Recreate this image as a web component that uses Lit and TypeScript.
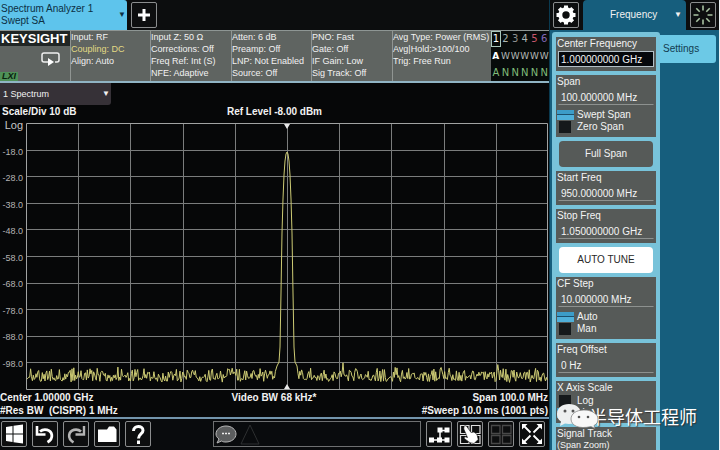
import { LitElement, html, css, svg, nothing } from "lit";
import { customElement, property } from "lit/decorators.js";
import { classMap } from "lit/directives/class-map.js";

const PLOT_W = 522;
const PLOT_H = 267;

// Noise floor with a narrow carrier in the middle of the span.
function buildTrace(): string {
  let seed = 71;
  const rnd = () => {
    seed = (seed * 16807) % 2147483647;
    return seed / 2147483647;
  };
  const noise = () => 257 - Math.pow(rnd(), 2) * 11 + (rnd() - 0.5) * 5 - (rnd() > 0.96 ? 5 : 0);
  const pts: string[] = [];
  for (let x = 1; x < 250; x += 0.9) pts.push(`${x.toFixed(1)},${noise().toFixed(1)}`);
  pts.push("251,243", "253,239", "254,224", "255,170", "256,110", "257,76", "258,52", "259,38", "260,31", "261,29");
  pts.push("262,31", "263,38", "264,52", "265,76", "266,110", "267,170", "268,224", "269,239", "271,243");
  for (let x = 272; x < PLOT_W; x += 0.9) pts.push(`${x.toFixed(1)},${noise().toFixed(1)}`);
  return pts.join(" ");
}
const TRACE = buildTrace();

const ICONS: Record<string, unknown> = {
  plus: svg`<path d="M12 6v12M6 12h12" stroke="#fff" stroke-width="3"/>`,
  windows: svg`<path fill="#fff" d="M4 5l6.500-1v7.500H4zM11.500 3.800L21 2.400v9.100h-9.500zM4 12.500h6.500V20L4 19zM11.500 12.500H21v9.100l-9.500-1.400z"/>`,
  undo: svg`<path d="M7 9.500C11 6 18 7.500 18.800 13c.4 3-1.300 5.500-4.300 7.300" fill="none" stroke="#fff" stroke-width="2.800"/><path d="M4 4v8.500h8.500" fill="none" stroke="#fff" stroke-width="2.600"/>`,
  redo: svg`<path d="M17 9.500C13 6 6 7.500 5.200 13c-.4 3 1.300 5.500 4.300 7.300" fill="none" stroke="#b4b4b4" stroke-width="2.600"/><path d="M20 4v8.500h-8.500" fill="none" stroke="#b4b4b4" stroke-width="2.400"/>`,
  folder: svg`<path fill="#fff" d="M3 7.500h9l2-3h5l2.500 3V20H3z"/>`,
  help: svg`<path d="M7.500 9c0-6 9.500-6 9.500-.5 0 3.500-4.500 3.500-4.500 8" fill="none" stroke="#fff" stroke-width="3"/><rect x="11" y="18.500" width="3" height="3.500" fill="#fff"/>`,
  nodes: svg`<path d="M5 18h14M13 8.500V18M13 8.500h7" stroke="#fff" stroke-width="1.500"/><path fill="#fff" d="M10.500 5.500h5v5h-5zM17.500 5.500h5v5h-5zM2 15.500h5v5H2zM10 15.500h5v5h-5zM17.500 15.500h5v5h-5z"/>`,
  touch: svg`<path d="M2.500 3.500H11v8H2.500zM13.500 3.500H22v8h-8.500zM2.500 13.500H11v8H2.500zM13.500 13.500H22v8h-8.500z" fill="none" stroke="#ddd" stroke-width="1.200"/><path fill="#fff" stroke="#111" stroke-width=".6" d="M6 4.500c.8-1.200 2.200-.8 3 .3l4 5.700 3-.5 3 2.500 1.200 5-4.200 4-4-.8-5.500-4c-.7-1.300.3-2.200 1.500-1.700l1.500.5L5.800 7z"/>`,
  grid: svg`<path d="M2.500 3.500H11v8H2.500zM13.500 3.500H22v8h-8.500zM2.500 13.500H11v8H2.500zM13.500 13.500H22v8h-8.500z" fill="none" stroke="#484848" stroke-width="1.300"/>`,
  expand: svg`<path d="M4 4l6.500 6.500M20 4l-6.500 6.500M4 20l6.500-6.500M20 20l-6.500-6.500" stroke="#fff" stroke-width="1.800"/><path fill="#fff" d="M2 2h5.500L2 7.500zM22 2h-5.500L22 7.500zM2 22h5.500L2 16.500zM22 22h-5.500l5.500-5.500z"/>`,
  gear: svg`<circle cx="12" cy="12" r="5.700" fill="none" stroke="#fff" stroke-width="4"/><path d="M12 2.500V6M12 18v3.500M2.500 12H6M18 12h3.500M5.300 5.300l2.300 2.300M16.400 16.400l2.300 2.300M18.700 5.300l-2.300 2.300M7.600 16.400l-2.300 2.300" stroke="#fff" stroke-width="4"/>`,
  burst: svg`<path d="M12 2.500v5M12 16.500v5M2.500 12h5M16.500 12h5M5.300 5.300l3.400 3.400M15.300 15.300l3.400 3.400M18.700 5.300l-3.400 3.400M8.700 15.300l-3.400 3.400" stroke="#a9c3a2" stroke-width="1.600"/>`,
};

@customElement("icon-button")
class IconButton extends LitElement {
  @property() icon = "";
  @property() label = "";
  static styles = css`
    :host { display: block; flex: none; }
    .btn {
      display: grid; place-items: center; width: 26px; height: 26px; padding: 0;
      background: #0d0e0f; border: 1px solid #8b8d8e; border-radius: 2px;
    }
    .glyph { width: 24px; height: 24px; display: block; }
  `;
  render() {
    return html`<button class="btn" aria-label=${this.label}>
      <svg class="glyph" viewBox="0 0 24 24" aria-hidden="true">${ICONS[this.icon]}</svg>
    </button>`;
  }
}

@customElement("setting-card")
class SettingCard extends LitElement {
  @property() name = "";
  @property() note = "";
  @property() value = "";
  @property({ type: Boolean }) active = false;
  @property({ type: Array }) options: string[] = [];
  @property({ type: Number }) selected = 0;
  static styles = css`
    :host { display: block; }
    .card {
      background: #565a58; color: #f4f4f4; padding: 0 2px 4px 0;
      font: 10px/14px "Liberation Sans", Arial, sans-serif;
    }
    .name { display: block; padding-left: 1px; white-space: nowrap; }
    .note { display: block; padding-left: 1px; font-size: 9px; line-height: 8px; }
    .value {
      display: block; box-sizing: border-box; width: calc(100% - 2px); height: 16px; margin: 0 0 0 2px;
      padding: 0 0 0 2px; font: inherit; color: inherit; background: none;
      border: 1px solid transparent; border-bottom-color: #8d918f; outline: none;
    }
    .value.active { background: #05080c; border-color: #b3bfc6; }
    .options { border: 0; margin: 0; padding: 0; }
    .value + .options { padding-top: 4px; }
    .option { display: grid; grid-template-columns: 18px 1fr; column-gap: 3px; align-items: center; height: 12px; line-height: 12px; }
    .radio { appearance: none; margin: 0; width: 12px; height: 12px; justify-self: center; background: #15191b; }
    .radio:checked { width: 17px; height: 10px; background: linear-gradient(#3c9cc8 0 4px, #1b4f6c 4px 5px, #4fb0da 5px); }
  `;
  render() {
    return html`<div class="card">
      ${this.value
        ? html`<label class="name" for="v">${this.name}</label>
            <input id="v" class=${classMap({ value: true, active: this.active })} .value=${this.value} />`
        : html`<span class="name">${this.name}</span>`}
      ${this.note ? html`<span class="note">${this.note}</span>` : nothing}
      ${this.options.length
        ? html`<fieldset class="options" aria-label=${this.name}>
            ${this.options.map(
              (o, i) => html`<label class="option"><input class="radio" type="radio" name="mode" .checked=${i === this.selected} />${o}</label>`
            )}
          </fieldset>`
        : nothing}
    </div>`;
  }
}

@customElement("spectrum-plot")
class SpectrumPlot extends LitElement {
  static styles = css`
    :host { display: block; }
    .plot { display: block; width: 100%; height: 267px; }
    .line { vector-effect: non-scaling-stroke; fill: none; }
    .grid { stroke: #7a7c7c; }
    .frame { stroke: #a0a2a2; }
    .trace { stroke: #cdcb74; stroke-linejoin: round; }
    .marker { fill: #e8e8e8; }
  `;
  render() {
    const steps = [1, 2, 3, 4, 5, 6, 7, 8, 9];
    return html`<svg class="plot" viewBox="0 0 ${PLOT_W} ${PLOT_H}" preserveAspectRatio="none" role="img" aria-label="Spectrum trace">
      ${steps.map((i) => svg`<line class="line grid" x1=${Math.round(i * 52.2) + 0.5} x2=${Math.round(i * 52.2) + 0.5} y1="0" y2="267"/>
        <line class="line grid" x1="0" x2="522" y1=${Math.round(i * 26.6) + 0.5} y2=${Math.round(i * 26.6) + 0.5}/>`)}
      <rect class="line frame" x="0.5" y="0.5" width="521" height="266"/>
      <path class="marker" d="M258 1h6l-3 5zM258 266h6l-3-5z"/>
      <polyline class="line trace" points=${TRACE}/>
    </svg>`;
  }
}

const STATUS = [
  ["Input: RF", "Coupling: DC", "Align: Auto"],
  ["Input Z: 50 Ω", "Corrections: Off", "Freq Ref: Int (S)", "NFE: Adaptive"],
  ["Atten: 6 dB", "Preamp: Off", "LNP: Not Enabled", "Source: Off"],
  ["PNO: Fast", "Gate: Off", "IF Gain: Low", "Sig Track: Off"],
  ["Avg Type: Power (RMS)", "Avg|Hold:>100/100", "Trig: Free Run"],
];
const LEVELS = ["-18.0", "-28.0", "-38.0", "-48.0", "-58.0", "-68.0", "-78.0", "-88.0", "-98.0"];

@customElement("app-root")
class AppRoot extends LitElement {
  static styles = css`
    :host {
      display: block; position: relative; height: 100vh; overflow: hidden; background: #060708; color: #f2f2f2;
      font: 10px/12px "Liberation Sans", Arial, sans-serif;
    }
    button, select { font: inherit; color: inherit; }
    .screen { display: grid; grid-template-columns: minmax(0, 1fr) 170px; height: 100%; border-right: 1px solid #eef4f6; box-sizing: border-box; }
    .main { display: flex; flex-direction: column; min-width: 0; }
    .tabs { display: flex; gap: 4px; height: 30px; align-items: center; background: #0c0d0e; }
    .mode {
      position: relative; width: 127px; height: 30px; padding: 2px 1px 3px; text-align: left; line-height: 12px;
      background: #5ec4ec; color: #0c3044; border: 0; border-radius: 0 3px 0 0;
    }
    .caret { font-size: 8px; line-height: 8px; }
    .mode .caret { position: absolute; right: 1px; top: 11px; }

    .status {
      display: grid; grid-template-columns: 70fr 80fr 81fr 80fr 81fr 99fr 58px; height: 50px;
      background: #5f6461; border-top: 1px solid #8e9694; border-bottom: 2px solid #90b4c4;
      font-size: 9px; line-height: 12px;
    }
    .cell { border-left: 1px solid #909592; white-space: nowrap; min-width: 0; }
    .brand { display: flex; flex-direction: column; justify-content: space-between; align-items: flex-start; }
    .logo { align-self: stretch; background: #202524; color: #fff; font: bold 13px/15px "Liberation Sans", Arial, sans-serif; padding-left: 1px; }
    .loop { width: 22px; height: 16px; align-self: flex-end; margin-right: 8px; }
    .lxi { background: #4f9158; color: #09220d; font: italic bold 9px/9px "Liberation Sans", Arial, sans-serif; padding: 0 2px; }
    .warn { color: #e2da84; }
    .traces { table-layout: fixed; width: 58px; height: 50px; border-collapse: collapse; background: #070b0a; font: 10px/16px "DejaVu Sans", sans-serif; text-align: center; }
    .traces th { font-weight: normal; padding: 0; }
    .traces td { padding: 0; }
    .traces .sel { outline: 1px solid #a9c8bd; outline-offset: -1px; color: #fff; }
    .traces .t3 { color: #8d918f; } .traces .t2, .traces .t4 { color: #aab4b2; }
    .traces .t5 { color: #c8566c; } .traces .t6 { color: #8268b8; }
    .types { color: #b4b8b6; font-size: 9px; } .types .on { color: #fff; font-weight: bold; }
    .dets { color: #80bd7b; }

    .view { display: flex; align-items: center; width: 111px; height: 22px; background: #363137; border-radius: 0 0 3px 0; }
    .pick { appearance: none; flex: 1; min-width: 0; background: none; border: 0; padding: 0 0 0 3px; font-size: 9px; outline: none; }
    .view .caret { padding-right: 1px; }
    .scale { display: grid; grid-template-columns: 1fr auto 1fr; line-height: 13px; font-weight: bold; padding: 0 2px; }
    .graph { display: grid; grid-template-columns: 26px minmax(0, 1fr); padding-right: 1px; }
    .graph spectrum-plot { margin-top: 5px; }
    .axis { display: flex; flex-direction: column; justify-content: space-between; height: 253px; padding-right: 3px; text-align: right; color: #b4b4b4; font-size: 9px; line-height: 14px; }
    .log { font-size: 11px; color: #c6c6c6; }
    .foot { display: grid; grid-template-columns: 1fr auto 1fr; font-weight: bold; line-height: 13px; padding: 1px 1px 0 0; white-space: nowrap; }
    .end { text-align: right; }
    .toolbar { display: flex; flex: 1; align-items: flex-start; gap: 5px; padding: 2px 4px 0 1px; border-top: 2px solid #7294ac; background: #090b0d; }
    .message { flex: 1; height: 24px; margin-left: 57px; border: 1px solid #6e7071; display: flex; align-items: center; }
    .bubble { width: 48px; height: 24px; }

    .side { display: flex; flex-direction: column; min-width: 0; border-left: 1px solid #0a3a50; }
    .sidetop { display: grid; grid-template-columns: 26px 1fr 26px; gap: 4px; height: 30px; padding: 0 3px; background: #0c0d0e; align-items: center; }
    .topic { display: flex; align-items: center; height: 30px; background: #165e7d; border-radius: 4px 4px 0 0; }
    .topic .pick { font-size: 10px; padding: 0 0 0 27px; }
    .topic .caret { padding-right: 4px; }
    .sidebody { display: grid; grid-template-columns: 108px 1fr; flex: 1; min-height: 0; background: #165e7d; padding: 2px 3px 0 2px; }
    .menu { display: flex; flex-direction: column; gap: 4px; background: #78c3da; padding: 5px 4px 0 4px; border-radius: 3px 3px 0 0; }
    .action { flex: none; height: 26px; margin: 0 3px; background: #565a58; border: 0; border-radius: 4px; }
    .action.light { background: #fff; color: #282828; }
    .settings { height: 28px; margin-top: 3px; background: #6cc9e6; color: #123c50; border: 0; border-radius: 0 3px 3px 0; text-align: left; padding: 0 0 0 3px; }

    .credit {
      position: absolute; right: 23px; bottom: 21px; display: flex; align-items: center; color: #fff;
      font: 18px/24px "Noto Sans CJK SC", sans-serif; text-shadow: 1px 1px 1px #333;
    }
    .chat { width: 44px; height: 26px; margin-right: -11px; z-index: 1; }
  `;

  render() {
    return html`
      <div class="screen">
        <main class="main">
          <nav class="tabs">
            <button class="mode">Spectrum Analyzer 1<br />Swept SA<span class="caret">▼</span></button>
            <icon-button icon="plus" label="Add screen"></icon-button>
          </nav>
          <section class="status">
            <div class="brand">
              <span class="logo">KEYSIGHT</span>
              <svg class="loop" viewBox="0 0 22 16" aria-hidden="true">
                <path d="M8 11H4q-2 0-2-2V4q0-2 2-2h13q2 0 2 2v5q0 2-2 2h-2" fill="none" stroke="#f0f0f0" stroke-width="1.500" />
                <path d="M8 7l6 4-6 4z" fill="#fff" />
              </svg>
              <span class="lxi">LXI</span>
            </div>
            ${STATUS.map(
              (col) => html`<div class="cell">
                ${col.map((t) => html`<div>${t.startsWith("Coupling") ? html`<span class="warn">${t}</span>` : t}</div>`)}
              </div>`
            )}
            <table class="traces" aria-label="Traces">
              <thead><tr>${[1, 2, 3, 4, 5, 6].map((n) => html`<th class=${n === 1 ? "sel" : `t${n}`}>${n}</th>`)}</tr></thead>
              <tbody>
                <tr class="types">${[..."AWWWWW"].map((c, i) => html`<td class=${i ? "" : "on"}>${c}</td>`)}</tr>
                <tr class="dets">${[..."ANNNNN"].map((c) => html`<td>${c}</td>`)}</tr>
              </tbody>
            </table>
          </section>
          <div class="view">
            <select class="pick" aria-label="View"><option>1 Spectrum</option></select>
            <span class="caret">▼</span>
          </div>
          <div class="scale"><span>Scale/Div 10 dB</span><span>Ref Level -8.00 dBm</span><span></span></div>
          <div class="graph">
            <div class="axis"><span class="log">Log</span>${LEVELS.map((l) => html`<span>${l}</span>`)}</div>
            <spectrum-plot></spectrum-plot>
          </div>
          <div class="foot">
            <span>Center 1.00000 GHz</span><span>Video BW 68 kHz*</span><span class="end">Span 100.0 MHz</span>
            <span>#Res BW&nbsp; (CISPR) 1 MHz</span><span></span><span class="end">#Sweep 10.0 ms (1001 pts)</span>
          </div>
          <footer class="toolbar">
            <icon-button icon="windows" label="Windows"></icon-button>
            <icon-button icon="undo" label="Undo"></icon-button>
            <icon-button icon="redo" label="Redo"></icon-button>
            <icon-button icon="folder" label="Files"></icon-button>
            <icon-button icon="help" label="Help"></icon-button>
            <div class="message">
              <svg class="bubble" viewBox="0 0 48 24" aria-hidden="true">
                <path d="M12 4c5.500 0 10 3.500 10 8s-4.500 8-10 8c-1.500 0-3 0-4.500-1L3 21l2-4c-2-1.500-3-3-3-5 0-4.500 4.500-8 10-8z" fill="#5c5e5f" stroke="#b8b8b8" />
                <path d="M8 11.500h2M11 11.500h2M14 11.500h2" stroke="#eee" stroke-width="1.500" />
                <path d="M36 3l9 19H27z" fill="none" stroke="#2d2f30" />
              </svg>
            </div>
            <icon-button icon="nodes" label="Block diagram"></icon-button>
            <icon-button icon="touch" label="Touch"></icon-button>
            <icon-button icon="grid" label="Multiple screens"></icon-button>
            <icon-button icon="expand" label="Full screen"></icon-button>
          </footer>
        </main>
        <aside class="side">
          <div class="sidetop">
            <icon-button icon="gear" label="System"></icon-button>
            <div class="topic">
              <select class="pick" aria-label="Menu"><option>Frequency</option></select>
              <span class="caret">▼</span>
            </div>
            <icon-button icon="burst" label="Activity"></icon-button>
          </div>
          <div class="sidebody">
            <div class="menu">
              <setting-card name="Center Frequency" value="1.000000000 GHz" active></setting-card>
              <setting-card name="Span" value="100.000000 MHz" .options=${["Swept Span", "Zero Span"]}></setting-card>
              <button class="action">Full Span</button>
              <setting-card name="Start Freq" value="950.000000 MHz"></setting-card>
              <setting-card name="Stop Freq" value="1.050000000 GHz"></setting-card>
              <button class="action light">AUTO TUNE</button>
              <setting-card name="CF Step" value="10.000000 MHz" .options=${["Auto", "Man"]}></setting-card>
              <setting-card name="Freq Offset" value="0 Hz"></setting-card>
              <setting-card name="X Axis Scale" .options=${["Log", "Lin"]} .selected=${1}></setting-card>
              <setting-card name="Signal Track" note="(Span Zoom)"></setting-card>
            </div>
            <button class="settings">Settings</button>
          </div>
        </aside>
      </div>
      <div class="credit">
        <svg class="chat" viewBox="0 0 44 26" aria-hidden="true">
          <path d="M13 1c7 0 12 4 12 10s-5 10-12 10l-4-.6L4 23l1-4.500C2 17 1 14 1 11 1 5 6 1 13 1z" fill="#eef0f0" />
          <circle cx="9" cy="8" r="1.500" fill="#555" /><circle cx="17" cy="8" r="1.500" fill="#555" />
          <path d="M28 7c8 0 14 4 14 9 0 3-1 5-4 6.500l1 3-4-2c-12 3-20-1-20-7.500 0-5 5-9 13-9z" fill="#f8f8f8" stroke="#777" stroke-width=".7" />
          <circle cx="23" cy="14" r="1.300" fill="#555" /><circle cx="32" cy="14" r="1.300" fill="#555" />
        </svg>
        <span>半导体工程师</span>
      </div>
    `;
  }
}
